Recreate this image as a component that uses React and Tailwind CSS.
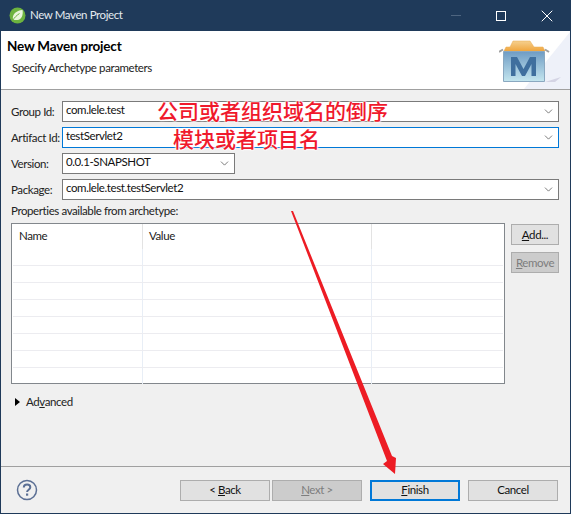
import React from 'react'
import { ChevronDown, X } from 'lucide-react'

const uiFont = "font-['Lato','Noto_Sans_CJK_SC',sans-serif]"

function Combo({ value, focused, className = '' }) {
  return (
    <div className={`flex h-[21px] items-center justify-between bg-white pl-[3px] pr-[3px] border ${focused ? 'border-[#0078d7]' : 'border-[#7a7a7a]'} ${className}`}>
      <span className="text-[11.5px] leading-none text-[#111] -mt-[3px]">{value}</span>
      <ChevronDown className="h-[13px] w-[13px] text-[#555]" strokeWidth={1.4} />
    </div>
  )
}

function Field({ label, value, focused, short }) {
  return (
    <div className="flex items-center">
      <label className="w-[51px] shrink-0 whitespace-nowrap text-[11.5px] leading-none text-[#222]">{label}</label>
      <Combo value={value} focused={focused} className={short ? 'w-[173px]' : 'flex-1'} />
    </div>
  )
}

function WizardButton({ children, disabled, primary, className = '' }) {
  const look = primary
    ? 'border-2 border-[#0078d7] bg-[#e1e1e1] text-[#111]'
    : disabled
      ? 'border border-[#adadad] bg-[#cccccc] text-[#7d7d7d]'
      : 'border border-[#adadad] bg-[#e1e1e1] text-[#111]'
  return (
    <button className={`flex h-[21px] items-center justify-center text-[11.5px] leading-none ${look} ${className}`}>
      {children}
    </button>
  )
}

function MavenLogo() {
  return (
    <svg width="71" height="58" viewBox="0 0 71 58" className="block shrink-0">
      <defs>
        <linearGradient id="box" x1="0" y1="0" x2="0" y2="1">
          <stop offset="0" stopColor="#6f9cc4" />
          <stop offset="1" stopColor="#c4e6ef" />
        </linearGradient>
        <linearGradient id="lid" x1="0" y1="0" x2="0" y2="1">
          <stop offset="0" stopColor="#f5d08f" />
          <stop offset="1" stopColor="#f0a63e" />
        </linearGradient>
      </defs>
      <path d="M71 1V58H25Z" fill="#eef1f9" />
      <path d="M46 51L62 46L56 51Z" fill="#d4d4e4" />
      <path d="M0 21L4 18.500M46 18.500L50 21" stroke="#a0a0a0" strokeWidth="2" />
      <path d="M5 20L7 16H11L14 10H31L35 16H44L46 20Z" fill="url(#lid)" stroke="#e8a84e" strokeWidth="0.500" />
      <path d="M4.500 20.500H45.500V50.500H4.500Z" fill="url(#box)" stroke="#8aa8c0" />
      <path d="M12 45V26H18L24.500 38L31 26H37V45H32.500V33L26 45H23L16.500 33V45Z" fill="#3f6f9e" />
    </svg>
  )
}

export default function App() {
  const rows = [0, 1, 2, 3, 4, 5, 6]

  return (
    <div className={`relative flex h-[514px] w-[571px] flex-col overflow-hidden border-x border-b border-[#1f3a5a] bg-[#f0f0f0] tracking-[-0.4px] ${uiFont}`}>
      {/* title bar */}
      <div className="-mx-px flex h-[31px] shrink-0 items-center bg-[#1f3a5a] pl-[9px]">
        <svg width="17" height="17" viewBox="0 0 17 17">
          <circle cx="8.500" cy="8.500" r="8" fill="#6db33f" />
          <path d="M4 12.500c-1-5 3-9 9.500-9.500 1 5-1 9.500-5 10-1.500.2-3-.1-4.500-.5z" fill="#e9f5dc" />
          <path d="M3.500 13.500c2-3 4-5 7-7" stroke="#6db33f" strokeWidth="1" fill="none" />
        </svg>
        <span className="ml-[4px] -mt-px text-[11.5px] leading-none text-[#e4eaf0]">New Maven Project</span>
        <div className="ml-auto flex items-center">
          <div className="mr-[35px] h-px w-[10px] bg-[#4e6580]" />
          <div className="mr-[31px] h-[10px] w-[10px] border border-white" />
          <X className="mr-[14px] h-[20px] w-[20px] text-white" strokeWidth={1.2} />
        </div>
      </div>

      {/* banner */}
      <div className="flex h-[59px] shrink-0 items-end justify-between border-b border-[#a0a0a0] bg-white">
        <div className="self-start pl-[6px] pt-[9px]">
          <h1 className="text-[13.5px] font-bold leading-none tracking-[-0.2px] text-black">New Maven project</h1>
          <p className="mt-[8px] pl-[5px] text-[11.5px] leading-none text-[#222]">Specify Archetype parameters</p>
        </div>
        <MavenLogo />
      </div>

      {/* form */}
      <div className="flex flex-1 flex-col pl-[10px] pr-[11px] pt-[11px]">
        <div className="flex flex-col gap-[5px]">
          <Field label="Group Id:" value="com.lele.test" />
          <Field label="Artifact Id:" value="testServlet2" focused />
          <Field label="Version:" value="0.0.1-SNAPSHOT" short />
          <Field label="Package:" value="com.lele.test.testServlet2" />
        </div>
        <p className="mt-[4px] text-[11.5px] leading-[14px] text-[#222]">Properties available from archetype:</p>

        <div className="mt-[5px] flex">
          <div className="h-[161px] w-[494px] border border-[#82878c] bg-white">
            <div className="flex h-[25px] text-[11.5px] leading-none text-[#222]">
              <div className="w-[131px] border-r border-[#e3e3e3] pl-[7px] pt-[6px]">Name</div>
              <div className="w-[229px] border-r border-[#e3e3e3] pl-[6px] pt-[6px]">Value</div>
            </div>
            <div className="h-[16px] flex">
              <div className="w-[131px] border-r border-[#e8eef6]" />
              <div className="w-[229px] border-r border-[#e8eef6]" />
            </div>
            {rows.map(r => (
              <div key={r} className="mx-px flex h-[17px] border-t border-[#ececf0]">
                <div className="w-[130px] border-r border-[#e8eef6]" />
                <div className="w-[229px] border-r border-[#e8eef6]" />
              </div>
            ))}
          </div>
          <div className="ml-[6px] flex flex-1 flex-col gap-[7px] pt-px">
            <WizardButton className="w-[48px]"><span><u>A</u>dd...</span></WizardButton>
            <WizardButton className="w-[48px]" disabled><span><u>R</u>emove</span></WizardButton>
          </div>
        </div>

        <div className="mt-[12px] flex items-center pl-[4px]">
          <span className="h-0 w-0 border-y-[4px] border-l-[5px] border-y-transparent border-l-black" />
          <span className="ml-[6px] text-[11.5px] leading-none text-[#222]">Ad<u>v</u>anced</span>
        </div>
      </div>

      {/* footer */}
      <div className="flex h-[47px] shrink-0 items-center border-t border-[#a0a0a0] pr-[12px]">
        <svg width="22" height="22" viewBox="0 0 22 22" className="ml-[15px]">
          <circle cx="11" cy="11" r="9.500" fill="none" stroke="#5b6f94" strokeWidth="1.500" />
          <path d="M7.800 8.500c0-2 1.500-3 3.300-3s3.200 1 3.200 2.700c0 2.500-3.200 2.500-3.200 4.800" fill="none" stroke="#5b6f94" strokeWidth="2" />
          <rect x="10" y="14.500" width="2.200" height="2.200" fill="#5b6f94" />
        </svg>
        <div className="ml-auto flex">
          <WizardButton className="w-[90px]"><span>&lt; <u>B</u>ack</span></WizardButton>
          <WizardButton className="ml-[2px] w-[90px]" disabled><span><u>N</u>ext &gt;</span></WizardButton>
          <WizardButton className="ml-[8px] w-[90px]" primary><span><u>F</u>inish</span></WizardButton>
          <WizardButton className="ml-[8px] w-[90px]">Cancel</WizardButton>
        </div>
      </div>

      {/* annotations drawn over the dialog */}
      <span className="absolute left-[156px] top-[97px] whitespace-nowrap font-['Noto_Sans_CJK_SC',sans-serif] text-[21px] font-medium leading-[26px] tracking-normal text-[#f0192c] [text-shadow:0_0_2px_#fff,0_0_2px_#fff,0_0_2px_#fff,0_0_3px_#fff]">公司或者组织域名的倒序</span>
      <span className="absolute left-[172px] top-[125px] whitespace-nowrap font-['Noto_Sans_CJK_SC',sans-serif] text-[21px] font-medium leading-[26px] tracking-normal text-[#f0192c] [text-shadow:0_0_2px_#fff,0_0_2px_#fff,0_0_2px_#fff,0_0_3px_#fff]">模块或者项目名</span>
      <svg width="571" height="514" viewBox="0 0 571 514" className="pointer-events-none absolute left-[-1px] top-0">
        <path d="M291 211L293 211L392 456L396 458L395 474L383 464L387 461Z" fill="#ed1c24" />
      </svg>
    </div>
  )
}
